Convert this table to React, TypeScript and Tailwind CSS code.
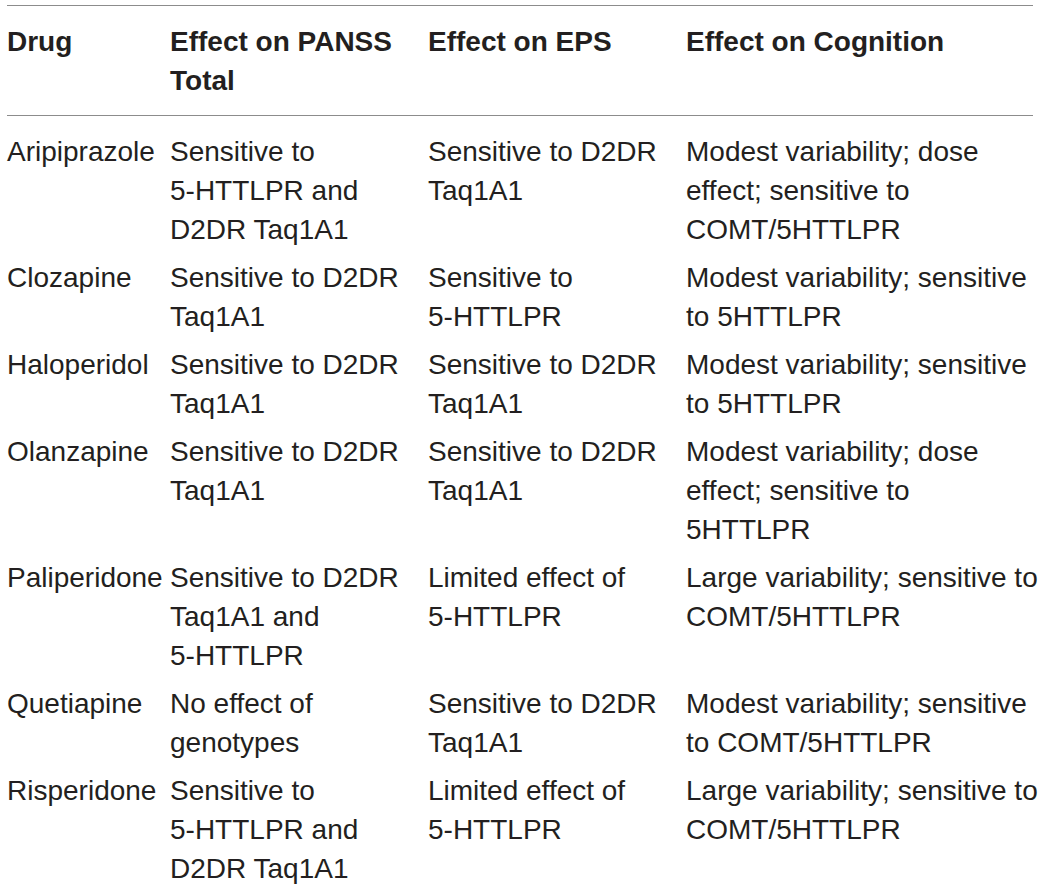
import React from "react";

type Row = { drug: string; panss: string[]; eps: string[]; cog: string[] };

const rows: Row[] = [
  {
    drug: "Aripiprazole",
    panss: ["Sensitive to", "5-HTTLPR and", "D2DR Taq1A1"],
    eps: ["Sensitive to D2DR", "Taq1A1"],
    cog: ["Modest variability; dose", "effect; sensitive to", "COMT/5HTTLPR"],
  },
  {
    drug: "Clozapine",
    panss: ["Sensitive to D2DR", "Taq1A1"],
    eps: ["Sensitive to", "5-HTTLPR"],
    cog: ["Modest variability; sensitive", "to 5HTTLPR"],
  },
  {
    drug: "Haloperidol",
    panss: ["Sensitive to D2DR", "Taq1A1"],
    eps: ["Sensitive to D2DR", "Taq1A1"],
    cog: ["Modest variability; sensitive", "to 5HTTLPR"],
  },
  {
    drug: "Olanzapine",
    panss: ["Sensitive to D2DR", "Taq1A1"],
    eps: ["Sensitive to D2DR", "Taq1A1"],
    cog: ["Modest variability; dose", "effect; sensitive to", "5HTTLPR"],
  },
  {
    drug: "Paliperidone",
    panss: ["Sensitive to D2DR", "Taq1A1 and", "5-HTTLPR"],
    eps: ["Limited effect of", "5-HTTLPR"],
    cog: ["Large variability; sensitive to", "COMT/5HTTLPR"],
  },
  {
    drug: "Quetiapine",
    panss: ["No effect of", "genotypes"],
    eps: ["Sensitive to D2DR", "Taq1A1"],
    cog: ["Modest variability; sensitive", "to COMT/5HTTLPR"],
  },
  {
    drug: "Risperidone",
    panss: ["Sensitive to", "5-HTTLPR and", "D2DR Taq1A1"],
    eps: ["Limited effect of", "5-HTTLPR"],
    cog: ["Large variability; sensitive to", "COMT/5HTTLPR"],
  },
];

function Lines({ lines }: { lines: string[] }) {
  return (
    <div className="flex flex-col">
      {lines.map((l, i) => (
        <span key={i} className="whitespace-nowrap">
          {l}
        </span>
      ))}
    </div>
  );
}

const grid = "grid grid-cols-[163px_258px_258px_1fr]";

export default function App() {
  return (
    <div
      className="w-[1040px] h-[891px] bg-white overflow-hidden pt-[5px] pl-[7px] pr-[7px] text-[#231f20] text-[28px] leading-[39px]"
      style={{ fontFamily: '"Liberation Sans", Arial, sans-serif' }}
    >
      <div className={`${grid} border-t border-b border-[#8c8c8c] pt-[16px] pb-[15px] font-bold`}>
        <div>Drug</div>
        <Lines lines={["Effect on PANSS", "Total"]} />
        <div className="whitespace-nowrap">Effect on EPS</div>
        <div className="whitespace-nowrap">Effect on Cognition</div>
      </div>
      <div className="pt-[16px]">
        {rows.map((r) => (
          <div key={r.drug} className={`${grid} pb-[9px]`}>
            <div className="whitespace-nowrap">{r.drug}</div>
            <Lines lines={r.panss} />
            <Lines lines={r.eps} />
            <Lines lines={r.cog} />
          </div>
        ))}
      </div>
    </div>
  );
}
